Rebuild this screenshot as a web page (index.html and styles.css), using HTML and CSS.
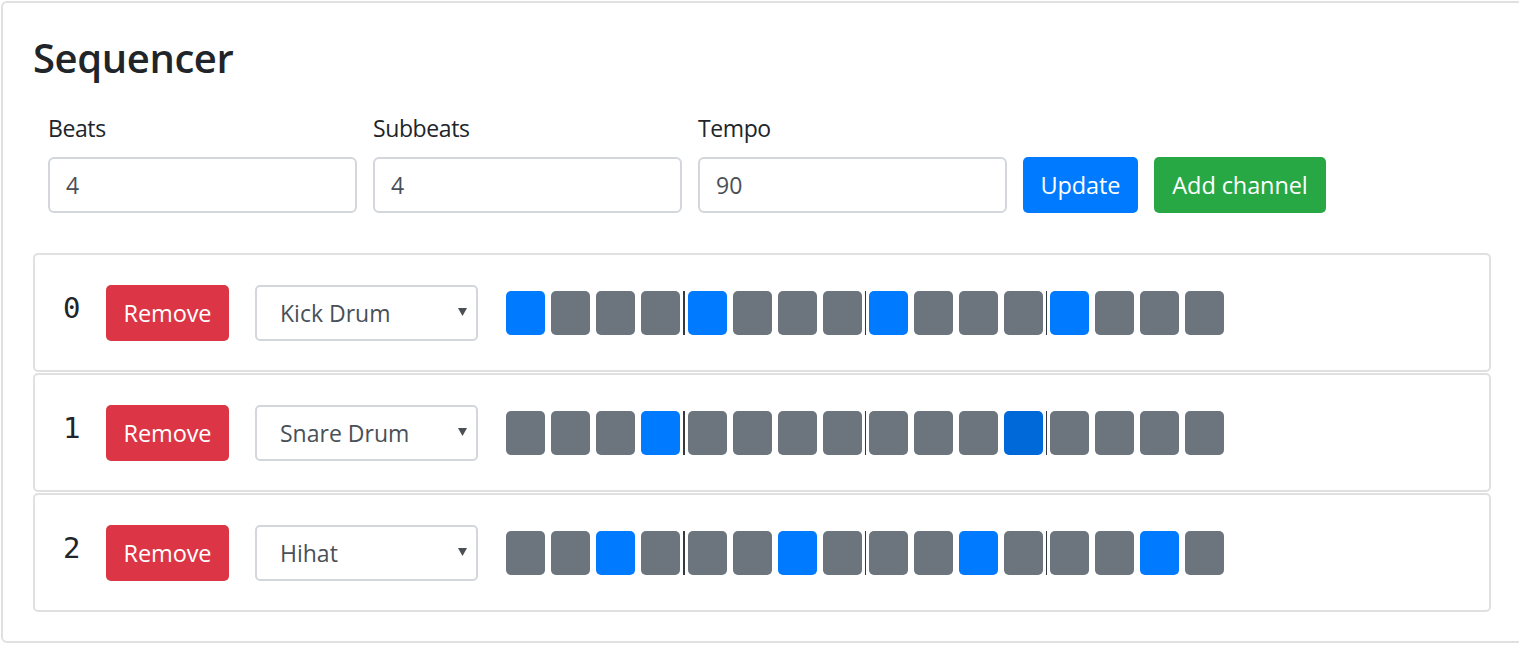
FILE: index.html
```html
<!DOCTYPE html>
<html lang="en">
<head>
<meta charset="utf-8">
<title>Sequencer</title>
<link rel="stylesheet" href="styles.css">
</head>
<body>
<div class="card">
  <h3 class="title">Sequencer</h3>
  <form class="controls">
    <div class="field">
      <label class="label">Beats</label>
      <input class="input" type="text" value="4">
    </div>
    <div class="field">
      <label class="label">Subbeats</label>
      <input class="input" type="text" value="4">
    </div>
    <div class="field">
      <label class="label">Tempo</label>
      <input class="input" type="text" value="90">
    </div>
    <button type="button" class="btn btn-primary btn-update">Update</button>
    <button type="button" class="btn btn-success btn-add">Add channel</button>
  </form>

  <div class="channels">
    <div class="channel">
      <div class="num">0</div>
      <button type="button" class="btn btn-danger">Remove</button>
      <div class="select-wrap">
        <select class="select"><option>Kick Drum</option><option>Snare Drum</option><option>Hihat</option></select>
        <svg class="caret" width="9" height="8" viewBox="0 0 9 8"><path d="M0 0H9L4.5 8Z" fill="#4a4f55"/></svg>
      </div>
      <div class="steps">
        <div class="group"><span class="step on"></span><span class="step"></span><span class="step"></span><span class="step"></span></div>
        <div class="group"><span class="step on"></span><span class="step"></span><span class="step"></span><span class="step"></span></div>
        <div class="group"><span class="step on"></span><span class="step"></span><span class="step"></span><span class="step"></span></div>
        <div class="group"><span class="step on"></span><span class="step"></span><span class="step"></span><span class="step"></span></div>
      </div>
    </div>

    <div class="channel">
      <div class="num">1</div>
      <button type="button" class="btn btn-danger">Remove</button>
      <div class="select-wrap">
        <select class="select"><option>Kick Drum</option><option selected>Snare Drum</option><option>Hihat</option></select>
        <svg class="caret" width="9" height="8" viewBox="0 0 9 8"><path d="M0 0H9L4.5 8Z" fill="#4a4f55"/></svg>
      </div>
      <div class="steps">
        <div class="group"><span class="step"></span><span class="step"></span><span class="step"></span><span class="step on"></span></div>
        <div class="group"><span class="step"></span><span class="step"></span><span class="step"></span><span class="step"></span></div>
        <div class="group"><span class="step"></span><span class="step"></span><span class="step"></span><span class="step on active"></span></div>
        <div class="group"><span class="step"></span><span class="step"></span><span class="step"></span><span class="step"></span></div>
      </div>
    </div>

    <div class="channel">
      <div class="num">2</div>
      <button type="button" class="btn btn-danger">Remove</button>
      <div class="select-wrap">
        <select class="select"><option>Kick Drum</option><option>Snare Drum</option><option selected>Hihat</option></select>
        <svg class="caret" width="9" height="8" viewBox="0 0 9 8"><path d="M0 0H9L4.5 8Z" fill="#4a4f55"/></svg>
      </div>
      <div class="steps">
        <div class="group"><span class="step"></span><span class="step"></span><span class="step on"></span><span class="step"></span></div>
        <div class="group"><span class="step"></span><span class="step"></span><span class="step on"></span><span class="step"></span></div>
        <div class="group"><span class="step"></span><span class="step"></span><span class="step on"></span><span class="step"></span></div>
        <div class="group"><span class="step"></span><span class="step"></span><span class="step on"></span><span class="step"></span></div>
      </div>
    </div>
  </div>
</div>
</body>
</html>
```

FILE: styles.css
```css
html, body {
  margin: 0;
  padding: 0;
  overflow: hidden;
  background: #fff;
}

body {
  font-family: "Open Sans", "Noto Sans", sans-serif;
  font-size: 24px;
  color: #212529;
}

.card {
  box-sizing: border-box;
  width: 1522px;
  margin: 1px 0 0 1px;
  border: 2px solid #e0e0e0;
  border-radius: 6px;
  padding: 30px 30px 29px 30px;
}

.title {
  margin: 0 0 27px 0;
  height: 50px;
  font-size: 40px;
  line-height: 50px;
  font-weight: 600;
  letter-spacing: -0.4px;
}

.controls {
  display: flex;
  align-items: flex-end;
  gap: 16px;
  padding-left: 15px;
  margin: 0 0 40px 0;
}

.field {
  display: flex;
  flex-direction: column;
  width: 309px;
}

.label {
  line-height: 36px;
  margin-bottom: 11px;
  font-size: 23px;
  letter-spacing: -0.4px;
}

.input {
  box-sizing: border-box;
  width: 100%;
  height: 56px;
  border: 2px solid #d3d7dc;
  border-radius: 6px;
  padding: 0 16px;
  font-family: inherit;
  font-size: 23px;
  color: #495057;
  background: #fff;
  outline: none;
}

.btn {
  box-sizing: border-box;
  height: 56px;
  border: 0;
  border-radius: 5px;
  padding: 0;
  font-family: inherit;
  font-size: 23.5px;
  color: #fff;
  letter-spacing: -0.1px;
  cursor: pointer;
  text-align: center;
}

.btn-update { width: 115px; }
.btn-add { width: 172px; }

.btn-primary { background: #007bff; }
.btn-success { background: #28a745; }
.btn-danger { background: #dc3545; }

.channel {
  box-sizing: border-box;
  height: 119px;
  margin-bottom: 1px;
  border: 2px solid #e0e0e0;
  border-radius: 5px;
  padding: 0 28px;
  display: flex;
  align-items: center;
}

.channel:last-child { margin-bottom: 0; }

.num {
  width: 43px;
  margin-bottom: 10px;
  font-family: "DejaVu Sans Mono", "Liberation Mono", monospace;
  font-size: 29px;
  line-height: 36px;
  color: #212529;
}

.channel .btn-danger {
  width: 123px;
}

.select-wrap {
  position: relative;
  margin-left: 26px;
  width: 223px;
  height: 56px;
}

.select {
  -webkit-appearance: none;
  appearance: none;
  box-sizing: border-box;
  width: 100%;
  height: 100%;
  border: 2px solid #d3d7dc;
  border-radius: 5px;
  padding: 0 30px 0 23px;
  font-family: inherit;
  font-size: 23px;
  color: #495057;
  background: #fff;
  outline: none;
}

.caret {
  position: absolute;
  right: 11px;
  top: 23px;
  pointer-events: none;
}

.steps {
  display: flex;
  margin-left: 25px;
  height: 44px;
}

.group {
  display: flex;
}

.group + .group {
  border-left: 1px solid #343a40;
}

.group:nth-child(2) {
  border-left-width: 2px;
}

.step {
  display: block;
  width: 39px;
  height: 44px;
  margin: 0 3px;
  border-radius: 5px;
  background: #6c757d;
}

.step.on { background: #007bff; }
.step.active { background: #0069d9; }
```
